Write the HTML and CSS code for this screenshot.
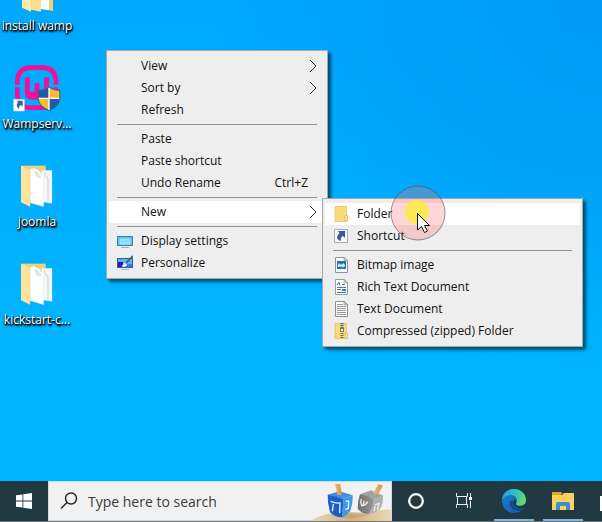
FILE: index.html
```html
<!DOCTYPE html>
<html lang="en">
<head>
<meta charset="utf-8">
<title>Desktop</title>
<link rel="stylesheet" href="styles.css">
</head>
<body>
<main class="desktop">
  <div class="shortcuts">
    <a class="shortcut" href="#">
      <svg class="shortcut-icon" viewBox="0 0 144 144" aria-hidden="true">
        <path fill="#f7dd8c" d="M27 10h74v112H27z"/>
        <path fill="#fdf6df" d="M72 20h48v111l-18-4z"/>
        <path fill="#fff" d="M83 20h26v110l-26-4z"/>
        <path fill="#d9e3ee" d="M88 113h10v2H88zM88 118h10v2H88z"/>
        <path fill="#f3cf72" d="M108 14h12v118l-12-4z"/>
        <path fill="#ffe9a6" d="M27 10l27 12v112l-27-12z"/>
        <path fill="#fbdf8c" d="M54 20l30 8v106l-30-6z"/>
      </svg>
      <span class="shortcut-label">install wamp</span>
    </a>
    <a class="shortcut" href="#">
      <svg class="shortcut-icon" viewBox="0 0 144 144" aria-hidden="true">
        <g fill="none" stroke="#f40f9b" stroke-width="14">
          <path d="M13 59V48Q15 8 54 8H88Q127 8 129 48V59"/>
          <path d="M13 67V88Q15 128 54 128H88Q127 128 129 88V67"/>
        </g>
        <path fill="none" stroke="#f40f9b" stroke-width="15" d="M43 37V82Q43 97 58 97H86Q101 97 101 82V37"/>
        <path fill="none" stroke="#f40f9b" stroke-width="15" d="M72 54V97"/>
        <path fill="#f40f9b" d="M50 80h43v22H50z"/>
        <path fill="#245aa5" d="M108 65q16 12 33 11v24q-1 26-33 37-32-11-33-37V76q17 1 33-11z"/>
        <path fill="#f9bd35" d="M108 68q15 10 31 10v22h-31zM108 100v34q-30-10-31-34z"/>
        <path fill="none" stroke="#fff" stroke-width="4" d="M108 68v67M77 100h62"/>
        <path fill="none" stroke="#536477" stroke-width="2" d="M108 65q16 12 33 11v24q-1 26-33 37-32-11-33-37V76q17 1 33-11z"/>
        <path fill="#fff" stroke="#c7d4dc" stroke-width="2" d="M2 103h32v35H2z"/>
        <path fill="#3263a6" d="M11 107h18v18l-5-5q-8 4-5 13-13-9-4-21z"/>
      </svg>
      <span class="shortcut-label">Wampserv...</span>
    </a>
    <a class="shortcut" href="#">
      <svg class="shortcut-icon" viewBox="0 0 144 144" aria-hidden="true">
        <path fill="#f1d27c" d="M24 8h74v104H24z"/>
        <path fill="#f7f7f7" stroke="#dde5ea" d="M86 22h31v99l-28-4z"/>
        <path fill="#fff" stroke="#cfd8dc" d="M51 18l12-3 17 10 12 20v86l-41-12z"/>
        <path fill="#e3e9ed" stroke="#aebdc6" d="M66 26l5 15 11 5v-8L73 28z"/>
        <path fill="none" stroke="#9dbfd6" stroke-width="2" d="M94 28l3 12 8 5v70"/>
        <path fill="#ffe39b" d="M24 8l27 14v109l-27-13z"/>
        <path fill="none" stroke="#f4cc72" d="M51 22v108"/>
      </svg>
      <span class="shortcut-label">joomla</span>
    </a>
    <a class="shortcut" href="#">
      <svg class="shortcut-icon" viewBox="0 0 144 144" aria-hidden="true">
        <path fill="#f1d27c" d="M24 8h74v104H24z"/>
        <path fill="#f7f7f7" stroke="#dde5ea" d="M86 22h31v99l-28-4z"/>
        <path fill="#fff" stroke="#cfd8dc" d="M51 18l12-3 17 10 12 20v86l-41-12z"/>
        <path fill="#e3e9ed" stroke="#aebdc6" d="M66 26l5 15 11 5v-8L73 28z"/>
        <path fill="none" stroke="#9dbfd6" stroke-width="2" d="M94 28l3 12 8 5v70"/>
        <path fill="#ffe39b" d="M24 8l27 14v109l-27-13z"/>
        <path fill="none" stroke="#f4cc72" d="M51 22v108"/>
      </svg>
      <span class="shortcut-label">kickstart-c...</span>
    </a>
  </div>

  <div class="menu menu-main" role="menu">
    <button class="item" role="menuitem"><span class="icon"></span><span class="text">View</span><svg class="arrow" viewBox="0 0 8 14" aria-hidden="true"><path d="M1 1l6 6-6 6"/></svg></button>
    <button class="item" role="menuitem"><span class="icon"></span><span class="text">Sort by</span><svg class="arrow" viewBox="0 0 8 14" aria-hidden="true"><path d="M1 1l6 6-6 6"/></svg></button>
    <button class="item" role="menuitem"><span class="icon"></span><span class="text">Refresh</span></button>
    <hr class="separator">
    <button class="item" role="menuitem"><span class="icon"></span><span class="text">Paste</span></button>
    <button class="item" role="menuitem"><span class="icon"></span><span class="text">Paste shortcut</span></button>
    <button class="item" role="menuitem"><span class="icon"></span><span class="text">Undo Rename</span><span class="keys">Ctrl+Z</span></button>
    <hr class="separator">
    <button class="item item-active" role="menuitem"><span class="icon"></span><span class="text">New</span><svg class="arrow" viewBox="0 0 8 14" aria-hidden="true"><path d="M1 1l6 6-6 6"/></svg></button>
    <hr class="separator">
    <button class="item" role="menuitem">
      <svg class="icon" viewBox="0 0 16 16" aria-hidden="true">
        <path fill="#3686b5" d="M0 3h16v10H0z"/><path fill="#55c1ee" d="M1 4h14v8H1z"/><path fill="#8adcf8" stroke="#c3effc" stroke-width=".7" d="M3 6h10v5H3z"/><path fill="#86b8d4" d="M4 14h8v1H4z"/>
      </svg>
      <span class="text">Display settings</span>
    </button>
    <button class="item" role="menuitem">
      <svg class="icon" viewBox="0 0 16 16" aria-hidden="true">
        <path fill="#28649c" d="M0 3h16v10H0z"/><path fill="#58b7ee" d="M1 4h14v5H1z"/><path fill="#3c0cc0" d="M1 7h5v5H1z"/><path fill="#2c7fe0" d="M6 9h9v3H6z"/><path fill="#e7f4fc" d="M4 11q2 0 3-3l3 1q0 3-3 3z"/><path fill="none" stroke="#52616c" stroke-width="1.8" d="M9 8l7-7"/><path fill="#aeb4cf" d="M4 14h8v1H4z"/>
      </svg>
      <span class="text">Personalize</span>
    </button>
  </div>

  <div class="menu menu-new" role="menu">
    <button class="item item-active" role="menuitem">
      <svg class="icon" viewBox="0 0 16 16" aria-hidden="true">
        <path fill="#fadb7c" stroke="#e5bf5a" stroke-width=".7" d="M2 .5h11.500v15H2z"/><path fill="#fde79c" stroke="#dcb54d" stroke-width=".7" d="M12 9.500h2.500v5.500H12z"/>
      </svg>
      <span class="text">Folder</span>
    </button>
    <button class="item" role="menuitem">
      <svg class="icon" viewBox="0 0 16 16" aria-hidden="true">
        <path fill="#f7f8fa" stroke="#a5adb8" d="M1.500 1.500h13v13h-13z"/><path fill="#355b98" d="M5 3h7v7L10 8Q7 9 8 13 2 11 5 7l1.500-2z"/>
      </svg>
      <span class="text">Shortcut</span>
    </button>
    <hr class="separator">
    <button class="item" role="menuitem">
      <svg class="icon" viewBox="0 0 16 16" aria-hidden="true">
        <path fill="#fff" stroke="#8a959b" d="M2.500.5h9l3 3v12h-12z"/><path fill="#d4dadd" stroke="#8a959b" stroke-width=".6" d="M11 .5v3.500h3.500z"/><path fill="#1978b8" d="M4 4h9v8H4z"/><path fill="#e4f5fc" d="M5 10V8l1-2 1 2 1-1 1 1 1-2 2 2v2l-1-1-1 2-1-2-1 1-1-1-1 1z"/>
      </svg>
      <span class="text">Bitmap image</span>
    </button>
    <button class="item" role="menuitem">
      <svg class="icon" viewBox="0 0 16 16" aria-hidden="true">
        <path fill="#fff" stroke="#969fa8" d="M2.500.5h9l3 3v12h-12z"/><path fill="#d4dadd" stroke="#8a959b" stroke-width=".6" d="M11 .5v3.500h3.500z"/><path fill="none" stroke="#5274a2" d="M4 6l2-3 1 3M9 5.500h3M4 8.500h9M4 10.500h4M4 13.500h9"/><path fill="#317ebb" d="M9 10h4v2H9z"/>
      </svg>
      <span class="text">Rich Text Document</span>
    </button>
    <button class="item" role="menuitem">
      <svg class="icon" viewBox="0 0 16 16" aria-hidden="true">
        <path fill="#fafafa" stroke="#8f8f8f" d="M2.500.5h9l3 3v12h-12z"/><path fill="#d4d4d4" stroke="#8a8a8a" stroke-width=".6" d="M11 .5v3.500h3.500z"/><path fill="none" stroke="#999" d="M4 3.500h6M4 5.500h9M4 7.500h9M4 9.500h9M4 11.500h9M4 13.500h9"/>
      </svg>
      <span class="text">Text Document</span>
    </button>
    <button class="item" role="menuitem">
      <svg class="icon" viewBox="0 0 16 16" aria-hidden="true">
        <path fill="#fadb75" stroke="#e0bb55" stroke-width=".7" d="M2 .5h11.500v15H2z"/><path fill="#ffe996" stroke="#dcb54d" stroke-width=".7" d="M12 10h2.500v5.500H12z"/><path fill="#c9c5b3" d="M7 0h4v7H7z"/><path fill="none" stroke="#66675f" stroke-width="3" stroke-dasharray="1 1" d="M9 0v16"/><path fill="#777" d="M7 5h4v4H7z"/><path fill="#eee" d="M8 6h2v2H8z"/>
      </svg>
      <span class="text">Compressed (zipped) Folder</span>
    </button>
  </div>

  <svg class="pointer" viewBox="0 0 56 56" aria-hidden="true">
    <circle cx="28" cy="28" r="27" fill="#ff6c6c" fill-opacity=".28" stroke="#4e4a55" stroke-opacity=".6"/>
    <circle cx="27" cy="27" r="12" fill="#ffed32" fill-opacity=".8"/>
    <path fill="#fff" stroke="#111" d="M27.500 28.500v16.500l4-3.500 3 6 3-1.500-3-5.500h5z"/>
  </svg>
</main>

<footer class="taskbar">
  <button class="start" aria-label="Start">
    <svg class="start-icon" viewBox="0 0 16 16" aria-hidden="true"><path fill="#fff" d="M0 2.300l6.500-.9v6.200H0zM7.300 1.300L16 0v7.600H7.300zM0 8.400h6.500v6.200L0 13.700zM7.300 8.400H16V16l-8.700-1.200z"/></svg>
  </button>
  <label class="search">
    <svg class="search-icon" viewBox="0 0 18 18" aria-hidden="true"><circle cx="11" cy="6.500" r="5.500"/><path d="M7 10.500L1 16.500"/></svg>
    <input class="search-input" type="text" placeholder="Type here to search" aria-label="Search">
    <svg class="search-art" viewBox="0 0 240 117" aria-hidden="true">
      <defs>
        <linearGradient id="sand" x1="0" x2="1"><stop offset="0" stop-color="#ead5b8"/><stop offset=".5" stop-color="#d3b083"/><stop offset="1" stop-color="#ecd8b6"/></linearGradient>
        <linearGradient id="wood" x1="0" x2="1"><stop offset="0" stop-color="#f3bd73"/><stop offset="1" stop-color="#d59242"/></linearGradient>
        <linearGradient id="steel" x1="0" x2="1"><stop offset="0" stop-color="#6f6f6f"/><stop offset="1" stop-color="#969696"/></linearGradient>
      </defs>
      <path fill="url(#sand)" d="M0 117q26-20 58-22 70-8 120 0 32-14 62-12v34z"/>
      <path fill="#b58d60" opacity=".4" d="M58 101l60-6 60 4-62 12z"/>
      <path fill="#3f8ce0" d="M50 38l35-10 40 12-28 11z"/>
      <path fill="#1b5fc8" d="M50 38q24 4 47 13l-3 55q-22-2-36-14-8-24-8-54z"/>
      <path fill="#3f97ea" d="M97 51l28-11q1 28-8 48-8 12-23 18z"/>
      <path fill="url(#wood)" d="M72 6l15-1 6 33-13 2z"/>
      <path fill="none" stroke="#e6f1ff" stroke-width="4" d="M59 58q12 6 28 5l-1 30M67 66l-3 22M104 58l9-1-1 22-9 4"/>
      <path fill="#a2a2a2" d="M147 37l33-12 36 16-27 13z"/>
      <path fill="url(#steel)" d="M147 37q24 4 42 17-2 26-17 43-20-2-32-17 0-24 7-43z"/>
      <path fill="#b0b0b0" d="M189 54l27-13q1 24-10 42-14 10-34 14 13-18 17-43z"/>
      <path fill="url(#wood)" d="M203 6l13 5-16 27-13-6z"/>
      <path fill="none" stroke="#eee" stroke-width="4" d="M151 51q-3 13 1 20 11 1 18-12M160 56l-4 14M191 69l13-5-5 20M193 73l-4 15"/>
    </svg>
  </label>
  <nav class="apps">
    <button class="app" aria-label="Cortana"><svg class="app-icon" viewBox="0 0 28 28" aria-hidden="true"><circle cx="14" cy="14" r="6.800" fill="none" stroke="#fff" stroke-width="2.200"/></svg></button>
    <button class="app" aria-label="Task view"><svg class="app-icon" viewBox="0 0 28 28" aria-hidden="true"><path fill="none" stroke="#e9eef0" d="M5.500 6v3.500h11V6M5.500 21v-3.500h11V21M6.500 9.500v8M15.500 9.500v8M19.500 6v4M19.500 14v7"/><path fill="#fff" d="M18 10h3v3h-3z"/></svg></button>
    <button class="app app-open" aria-label="Microsoft Edge">
      <svg class="app-icon" viewBox="0 0 28 28" aria-hidden="true">
        <defs>
          <linearGradient id="edge-top" x1="0" x2="1" y1=".3" y2=".6"><stop offset="0" stop-color="#299ddc"/><stop offset=".5" stop-color="#2fc2c4"/><stop offset="1" stop-color="#68db5c"/></linearGradient>
          <linearGradient id="edge-low" x1="0" x2="1" y1="0" y2="1"><stop offset="0" stop-color="#1985d4"/><stop offset="1" stop-color="#1253a4"/></linearGradient>
        </defs>
        <circle cx="14" cy="14" r="12" fill="url(#edge-low)"/>
        <path fill="url(#edge-top)" d="M2 13C3 5 8 2 14 2c8 0 12 6 12 11 0 4-3 6-6 6-4 0-5-2-4-3 3-4-1-8-5-8-4 0-7 2-9 5z"/>
        <path fill="#0d4c91" d="M10 14q-2 8 8 10 4 0 6-4-6 3-9 0-3-3-1-6z"/>
        <path fill="#213943" d="M14 12q3 1 2 4-1 2 3 3 4 0 6-2l1 2-2 2q-5 1-8-1-4-3-2-8z"/>
      </svg>
    </button>
    <button class="app app-open" aria-label="File Explorer">
      <svg class="app-icon" viewBox="0 0 28 28" aria-hidden="true">
        <path fill="#e6a321" d="M3 5h9l2 2h-2v3H3z"/><path fill="#fad161" d="M3 8h10l2-2h10v17H3z"/><path fill="#3c8fc8" d="M7 23v-6q0-2 2-2h10q2 0 2 2v6h-4v-4h-6v4z"/>
      </svg>
    </button>
    <button class="app" aria-label="Microsoft Store"><svg class="app-icon" viewBox="0 0 28 28" aria-hidden="true"><path fill="#fff" d="M2 9h24v15H2z"/></svg></button>
  </nav>
</footer>
</body>
</html>
```

FILE: styles.css
```css
* { box-sizing: border-box; }

body {
  margin: 0;
  height: 100vh;
  display: flex;
  flex-direction: column;
  overflow: hidden;
  font-family: "Open Sans", "Noto Sans", sans-serif;
  font-size: 12px;
  color: #111;
}

button {
  border: 0;
  padding: 0;
  background: none;
  font: inherit;
  color: inherit;
}

.desktop {
  position: relative;
  flex: 1;
  min-height: 0;
  background:
    radial-gradient(circle at 100% 0, #0099f3 0, rgba(0, 153, 243, 0) 50%),
    linear-gradient(180deg, #00a9fe, #00b4ff 75%);
}

/* Desktop shortcuts */
.shortcuts {
  position: absolute;
  left: 0;
  top: -33px;
  width: 74px;
  display: grid;
  grid-auto-rows: 98px;
}

.shortcut {
  display: flex;
  flex-direction: column;
  align-items: center;
  gap: 2px;
  color: #fff;
  text-decoration: none;
}

.shortcut-icon { width: 48px; height: 48px; }

.shortcut-label {
  line-height: 18px;
  white-space: nowrap;
  text-shadow: 0 1px 2px #000, 1px 1px 1px #000, 1px 2px 2px #000;
}

/* Context menus */
.menu {
  position: absolute;
  display: flex;
  flex-direction: column;
  padding: 4px 2px;
  border: 1px solid #a3a8ac;
  background: #eee;
  box-shadow: 3px 3px 3px rgba(0, 0, 0, .55);
}

.menu-main { left: 106px; top: 50px; width: 222px; }
.menu-new { left: 322px; top: 198px; width: 261px; }

.item {
  display: flex;
  align-items: center;
  gap: 8px;
  height: 22px;
  padding: 0 8px;
  text-align: left;
}

.item-active { background: #fff; }
.icon { width: 16px; height: 16px; flex: none; }
.text { flex: 1; }

.text,
.keys {
  line-height: 16px;
  white-space: nowrap;
}

.keys { padding-right: 9px; }
.arrow { width: 8px; height: 14px; fill: none; stroke: #333; }

.separator {
  align-self: stretch;
  height: 1px;
  margin: 3px 8px;
  border: 0;
  background: #919191;
}

.pointer {
  position: absolute;
  left: 390px;
  top: 185px;
  width: 56px;
  height: 56px;
  pointer-events: none;
}

/* Taskbar */
.taskbar {
  display: flex;
  height: 41px;
  background: #213943;
  border-bottom: 1px solid #6b7478;
}

.start {
  width: 48px;
  display: grid;
  place-items: center;
}

.start-icon { width: 16px; height: 16px; }

.search {
  flex: none;
  width: 344px;
  display: flex;
  align-items: center;
  padding-left: 11px;
  border: 1px solid #d5d9da;
  background: #f1f1f1;
}

.search-icon {
  width: 18px;
  height: 18px;
  fill: none;
  stroke: #222;
  stroke-width: 1.4;
}

.search-input {
  flex: 1;
  min-width: 0;
  padding: 0 0 0 10px;
  border: 0;
  background: none;
  font: 14px "Open Sans", "Noto Sans", sans-serif;
}

.search-input::placeholder { color: #3b3b3b; opacity: 1; }
.search-art { width: 80px; height: 39px; flex: none; }

.apps {
  display: flex;
  flex: 1;
  gap: 1px;
  overflow: hidden;
}

.app {
  flex: none;
  width: 48px;
  display: grid;
  place-items: center;
}

.app-icon { width: 28px; height: 28px; }

.app-open {
  background: linear-gradient(#83b5dc, #83b5dc) center bottom / 40px 2px no-repeat;
}
```
